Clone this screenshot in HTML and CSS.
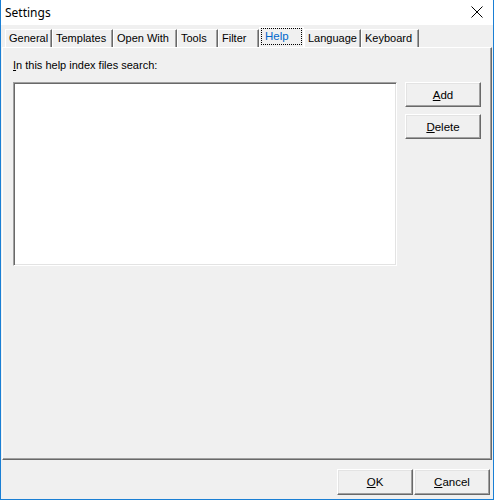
FILE: index.html
```html
<!DOCTYPE html>
<html lang="en">
<head>
    <meta charset="UTF-8">
    <title>Settings</title>
    <link rel="stylesheet" href="styles.css">
</head>
<body>
    <div class="window">
        <div class="titlebar">
            <span class="title">Settings</span>
            <svg class="close" width="12" height="12" viewBox="0 0 12 12">
                <path d="M0.5 0.5 L11.5 11.5 M11.5 0.5 L0.5 11.5" stroke="#000" stroke-width="1"/>
            </svg>
        </div>

        <div class="tabs">
            <div class="tab t-general">General</div>
            <div class="tab t-templates">Templates</div>
            <div class="tab t-open">Open With</div>
            <div class="tab t-tools">Tools</div>
            <div class="tab t-filter">Filter</div>
            <div class="tab active"><span class="focus">Help</span></div>
            <div class="tab t-language">Language</div>
            <div class="tab t-keyboard">Keyboard</div>
        </div>

        <div class="panel">
            <div class="panel-body">
                <div class="label"><u>I</u>n this help index files search:</div>
                <div class="listbox"></div>
                <div class="side-buttons">
                    <button class="btn"><u>A</u>dd</button>
                    <button class="btn"><u>D</u>elete</button>
                </div>
            </div>
        </div>

        <div class="footer">
            <button class="btn"><u>O</u>K</button>
            <button class="btn"><u>C</u>ancel</button>
        </div>
    </div>
</body>
</html>
```

FILE: styles.css
```css
body {
    margin: 0;
    background: #fff;
    font-family: "Liberation Sans", Arial, sans-serif;
    font-size: 11px;
    color: #000;
}

.window {
    width: 494px;
    height: 500px;
    box-sizing: border-box;
    background: #f0f0f0;
    border-right: 1px solid #1a7fd4;
    border-bottom: 1px solid #1a7fd4;
    border-left: 1px solid #1a7fd4;
    display: flex;
    flex-direction: column;
    overflow: hidden;
}

/* Заголовок окна */
.titlebar {
    height: 25px;
    background: #fff;
    margin-left: -1px;
    display: flex;
    align-items: center;
    justify-content: space-between;
    padding: 0 10px 0 5px;
}

.title {
    font-family: "Noto Sans", "Open Sans", sans-serif;
    font-size: 12px;
    margin-top: -1px;
}

.close {
    margin-top: -2px;
}

/* Вкладки */
.tabs {
    height: 22px;
    display: flex;
    align-items: flex-end;
    padding-left: 4px;
}

.tab {
    height: 17px;
    border-top: 1px solid #fff;
    border-left: 1px solid #fff;
    border-right: 1px solid #696969;
    box-shadow: inset -1px 0 0 #a0a0a0;
    padding-left: 3px;
    line-height: 17px;
    white-space: nowrap;
    flex: none;
}

.t-general { width: 42px; }
.t-templates { width: 56px; }
.t-open { width: 59px; }
.t-tools { width: 36px; }
.t-filter { width: 36px; }
.t-language { width: 52px; }
.t-keyboard { width: 53px; }

.tab.active {
    width: 42px;
    height: 20px;
    padding-left: 1px;
    margin-bottom: -1px;
    background: #f0f0f0;
    border-right: 1px solid #fff;
    box-shadow: none;
}

.focus {
    display: block;
    width: 36px;
    height: 15px;
    border: 1px dotted #000;
    color: #0066cc;
    padding-left: 3px;
    line-height: 14px;
    font-size: 11.5px;
}

/* Панель вкладки */
.panel {
    margin: 0 1px 0 1px;
    height: 413px;
    box-sizing: border-box;
    border-top: 1px solid #fff;
    border-left: 1px solid #fff;
    border-right: 1px solid #696969;
    border-bottom: 1px solid #696969;
    box-shadow: inset -1px -1px 0 #a0a0a0;
}

.panel-body {
    display: grid;
    grid-template-columns: 384px 76px;
    column-gap: 8px;
    padding: 11px 0 0 10px;
}

.label {
    grid-column: 1 / 3;
    height: 23px;
    line-height: 13px;
}

.listbox {
    height: 184px;
    box-sizing: border-box;
    background: #fff;
    border-top: 1px solid #a0a0a0;
    border-left: 1px solid #a0a0a0;
    border-right: 1px solid #fff;
    border-bottom: 1px solid #fff;
    box-shadow: inset 1px 1px 0 #696969, inset -1px -1px 0 #e3e3e3;
}

.side-buttons {
    display: flex;
    flex-direction: column;
    gap: 7px;
}

.btn {
    width: 76px;
    height: 25px;
    box-sizing: border-box;
    background: #f0f0f0;
    font-family: "Liberation Sans", Arial, sans-serif;
    font-size: 11.5px;
    color: #000;
    padding: 0;
    border-top: 1px solid #fff;
    border-left: 1px solid #fff;
    border-right: 1px solid #696969;
    border-bottom: 1px solid #696969;
    box-shadow: inset -1px -1px 0 #a0a0a0, inset 1px 1px 0 #e3e3e3;
}

/* Нижние кнопки */
.footer {
    display: flex;
    justify-content: flex-end;
    gap: 1px;
    padding: 9px 3px 0 0;
}

.footer .btn {
    height: 26px;
}
```
